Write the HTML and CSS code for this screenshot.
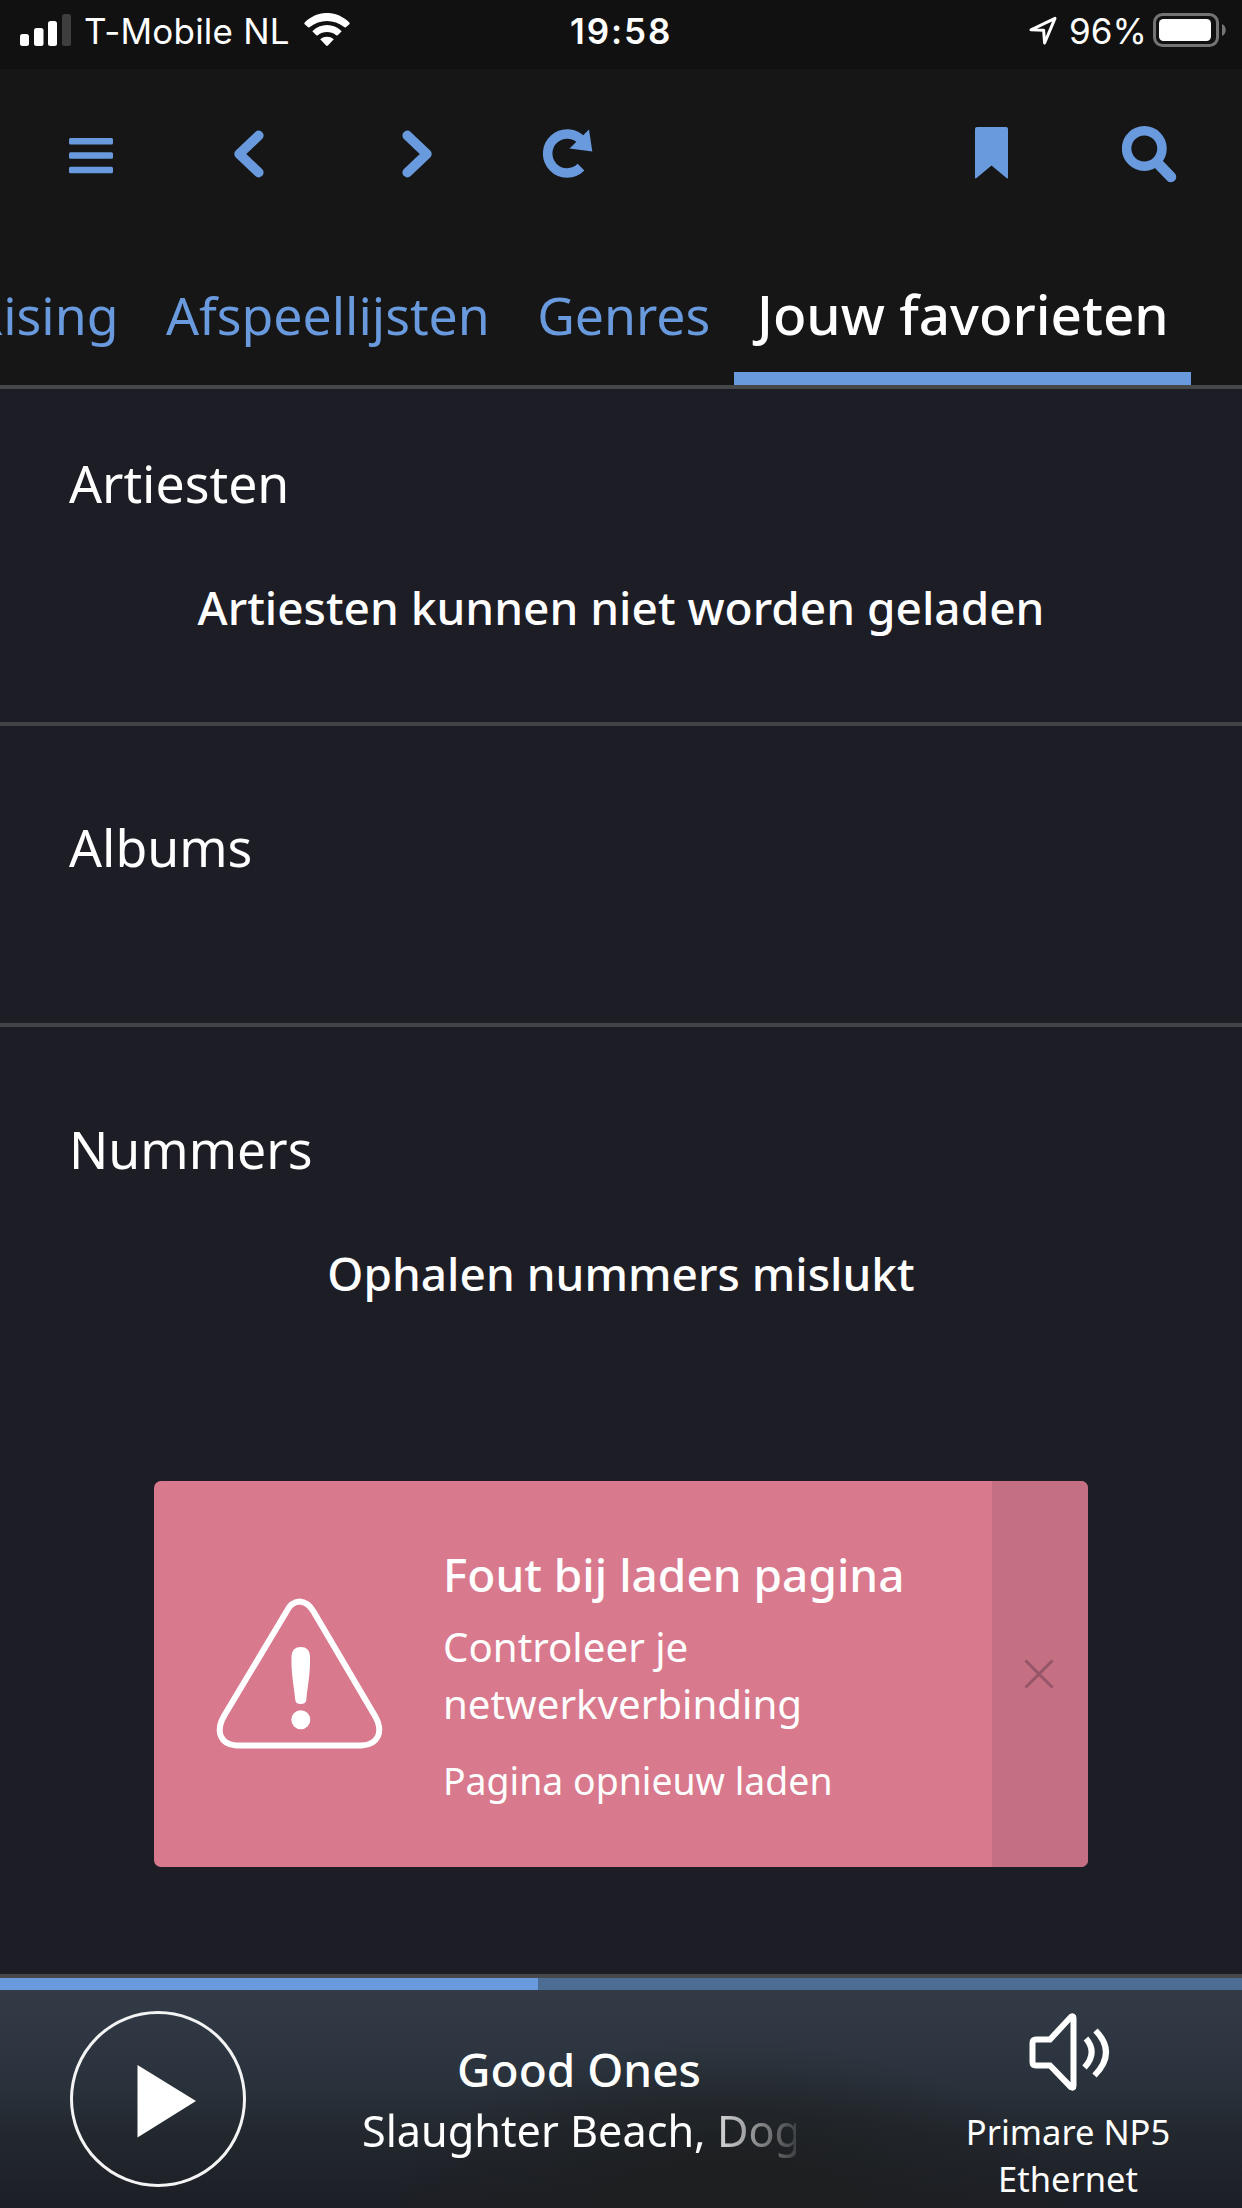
FILE: index.html
```html
<!DOCTYPE html>
<html lang="nl">
<head>
<meta charset="utf-8">
<title>Jouw favorieten</title>
<link rel="stylesheet" href="styles.css">
</head>
<body>
<div class="app">
  <header class="status">
    <svg class="signal" width="51" height="32" viewBox="0 0 51 32" fill="#fff"><rect y="20" width="9" height="12" rx="2.5"/><rect x="14" y="14" width="9.5" height="18" rx="2.5"/><rect x="28" y="7" width="9" height="25" rx="2.5"/><rect x="42" width="9" height="32" rx="2.5" fill="#3e3e3e"/></svg>
    <span class="carrier">T-Mobile NL</span>
    <svg class="wifi" width="46" height="34" viewBox="0 0 46 34" fill="#fff"><path d="M.7 9.500Q-.2 10.300 .7 11.300L4.100 14.200Q5 14.900 5.900 14.100C15.500 5.800 30.500 5.800 40.100 14.100Q41 14.900 41.900 14.200L45.300 11.300Q46.200 10.300 45.300 9.500C32.500-3.200 13.500-3.200 .7 9.500Z"/><path d="M8.300 18.200 12 22.100Q12.800 23 13.800 22.200C19 18 27 18 32.200 22.200Q33.200 23 34 22.100L37.700 18.200C29.500 9.800 16.500 9.800 8.300 18.200Z"/><path d="M16.200 26.200C20 22.900 26 22.900 29.800 26.200L23.900 32.500Q23 33.400 22.100 32.500Z"/></svg>
    <span class="clock">19:58</span>
    <svg class="location" width="28" height="29" viewBox="0 0 28 29" fill="none" stroke="#fff" stroke-width="3" stroke-linejoin="round"><path d="M2 13.800 26 2.300 15.600 27 14.600 14.200Z"/></svg>
    <span class="percent">96%</span>
    <svg class="battery" width="74" height="34" viewBox="0 0 74 34"><rect x="1.500" y="1.500" width="63" height="31" rx="8" fill="none" stroke="#747474" stroke-width="3"/><rect x="6" y="6" width="52" height="22" rx="4.500" fill="#fff"/><path d="M69 11C74 13 74 21 69 23Z" fill="#747474"/></svg>
  </header>

  <nav class="toolbar">
    <svg class="menu" width="44" height="36" viewBox="0 0 44 36" fill="#6a9ade"><rect width="44" height="6.500" rx="1.500"/><rect y="14.300" width="44" height="6.500" rx="1.500"/><rect y="28.700" width="44" height="6.500" rx="1.500"/></svg>
    <svg class="back" width="30" height="48" viewBox="0 0 30 48" fill="none" stroke="#6a9ade" stroke-width="9.800" stroke-linecap="round" stroke-linejoin="round"><path d="M24.700 5.500 5.200 24 24.700 42.500"/></svg>
    <svg class="forward" width="30" height="48" viewBox="0 0 30 48" fill="none" stroke="#6a9ade" stroke-width="9.800" stroke-linecap="round" stroke-linejoin="round"><path d="M5.300 5.500 24.800 24 5.300 42.500"/></svg>
    <svg class="reload" width="50" height="50" viewBox="0 0 50 50"><path d="M38 38.200A19.500 19.500 0 1 1 39 11.800" fill="none" stroke="#6a9ade" stroke-width="9.500"/><path d="M46 .5 49.300 22.500 26.500 19.500Z" fill="#6a9ade"/></svg>
    <svg class="bookmark" width="33" height="52" viewBox="0 0 33 52" fill="#6a9ade"><path d="M2 0H31Q33 0 33 2V50.500Q33 52 31.500 51L16.500 38.500 1.500 51Q0 52 0 50.500V2Q0 0 2 0Z"/></svg>
    <svg class="search" width="55" height="57" viewBox="0 0 55 57" fill="none" stroke="#6a9ade"><circle cx="22.300" cy="22.500" r="17.700" stroke-width="9.500"/><path d="M36 37.500 49 51" stroke-width="10.500" stroke-linecap="round"/></svg>
  </nav>

  <nav class="tabs">
    <a class="tab">Rising</a>
    <a class="tab">Afspeellijsten</a>
    <a class="tab">Genres</a>
    <a class="tab active">Jouw favorieten</a>
  </nav>

  <main class="content">
    <section class="section artists">
      <h2>Artiesten</h2>
      <p class="message">Artiesten kunnen niet worden geladen</p>
    </section>
    <section class="section albums">
      <h2>Albums</h2>
    </section>
    <section class="section tracks">
      <h2>Nummers</h2>
      <p class="message">Ophalen nummers mislukt</p>
    </section>
    <aside class="alert">
      <svg class="warning" width="168" height="152" viewBox="0 0 168 152"><path d="M70.500 13.500Q75 4 83.500 3.500 92 4 97.500 13.500L159 118C168 134 162 146.500 146 147.500H20C5 146.500-1 134 8 118Z" fill="none" stroke="#fff" stroke-width="6"/><path d="M75.500 58Q76 49 84.800 49 93.500 49 94 58C94.500 76 91.500 88 90.300 102Q90 106 84.800 106 79.600 106 79.300 102C78 88 75 76 75.500 58Z" fill="#fff"/><circle cx="84.800" cy="121.700" r="9.500" fill="#fff"/></svg>
      <div class="alert-text">
        <h3>Fout bij laden pagina</h3>
        <p class="hint">Controleer je netwerkverbinding</p>
        <p class="retry">Pagina opnieuw laden</p>
      </div>
      <div class="close"><svg width="30" height="30" viewBox="0 0 30 30" fill="none" stroke="#96566a" stroke-width="3"><path d="M1.500 1.500 28.500 28.500M28.500 1.500 1.500 28.500"/></svg></div>
    </aside>
  </main>

  <footer class="player">
    <div class="progress"><div class="elapsed" style="width:538px"></div></div>
    <div class="controls">
      <svg class="play" width="176" height="176" viewBox="0 0 176 176"><circle cx="88" cy="88" r="86.500" fill="none" stroke="#f4f4f4" stroke-width="3"/><path d="M67.500 54 126 90 67.500 126.500Z" fill="#fff"/></svg>
      <div class="now">
        <div class="title">Good Ones</div>
        <div class="artist">Slaughter Beach, Dog</div>
      </div>
      <div class="output">
        <svg width="82" height="78" viewBox="0 0 82 78" fill="none" stroke="#fff" stroke-width="6"><path d="M7 26.500H21L42 3.800Q44.500 2.500 44.500 5V73Q44.500 75.500 42 74.200L21 52.500H7Q3.500 52.500 3.500 49V30Q3.500 26.500 7 26.500Z"/><path d="M57 25.500Q69 39.500 55.500 54.500M66.500 17.500Q88 39.500 65.500 62.500"/></svg>
        <div class="device">Primare NP5<br>Ethernet</div>
      </div>
    </div>
  </footer>
</div>
</body>
</html>
```
FILE: styles.css
```css
* { box-sizing: border-box; margin: 0; padding: 0; }
body { background: #1d1d26; color: #fff; font-family: "Noto Sans", sans-serif; }
svg { display: block; flex: none; }
.app { width: 1242px; height: 2208px; display: flex; flex-direction: column; overflow: hidden; }

.status { height: 69px; background: #111; display: flex; align-items: flex-start; padding-left: 20px; font-family: Inter, sans-serif; font-size: 35px; line-height: 62px; white-space: nowrap; flex: none; }
.signal { margin-top: 14px; }
.carrier { width: 205px; margin-left: 13px; letter-spacing: 0.2px; }
.wifi { margin: 13px 0 0 15px; }
.clock { width: 104px; margin-left: 220px; font-weight: 600; letter-spacing: 1.9px; }
.location { margin: 16px 0 0 355px; }
.percent { width: 76px; margin-left: 12px; }
.battery { margin: 13px 0 0 8px; }

.toolbar { height: 167px; background: #161616; display: flex; padding-left: 69px; flex: none; }
.menu { margin-top: 69px; }
.back { margin: 61px 0 0 121px; }
.forward { margin: 61px 0 0 138px; }
.reload { margin: 60px 0 0 111px; }
.bookmark { margin: 58px 0 0 382px; }
.search { margin: 57px 0 0 114px; }

.tabs { height: 153px; background: #161616; border-bottom: 4px solid #464749; display: flex; justify-content: flex-end; padding-right: 51px; overflow: hidden; flex: none; }
.tab { flex: none; padding: 38px 23.700px 0; font-size: 51.750px; line-height: 82px; color: #6a9ade; white-space: nowrap; }
.tab.active { padding: 37px 0 0 23px; color: #fff; font-size: 54.800px; font-weight: 500; border-bottom: 13px solid #6a9ade; width: 457px; }

.content { height: 1585px; flex: none; }
.section { border-bottom: 4px solid #424347; }
.section h2 { font-size: 51.750px; font-weight: 400; line-height: 72px; padding-left: 69px; }
.message { font-size: 46px; font-weight: 500; line-height: 64px; text-align: center; margin-top: 56px; }
.artists { height: 337px; padding-top: 58px; }
.albums { height: 301px; padding-top: 85px; }
.tracks { height: 454px; padding-top: 86px; border-bottom: 0; }
.alert { width: 934px; height: 386px; margin-left: 154px; background: #d9798d; border-radius: 7px; display: flex; overflow: hidden; }
.warning { margin: 117px 0 0 62px; }
.alert-text { width: 549px; margin-left: 59px; padding-top: 61px; }
.alert h3 { font-size: 46px; font-weight: 500; line-height: 64px; }
.hint { width: 400px; font-size: 40.250px; line-height: 56.500px; margin-top: 13px; }
.retry { font-size: 37.400px; line-height: 52px; margin-top: 23px; }
.close { width: 96px; background: #c56f83; display: flex; align-items: center; justify-content: center; padding: 0 2px 1px 0; }

.player { height: 234px; flex: none; border-top: 4px solid #48484a; background: radial-gradient(ellipse 340px 170px at 730px 234px, #1d1f20 20%, transparent), linear-gradient(#343d47, #2b343e 40%, #23282f 68%, #1c1e25); }
.progress { height: 12px; background: #4e6d95; }
.elapsed { height: 12px; background: #6a9ade; }
.controls { display: flex; padding-left: 70px; }
.play { margin-top: 21px; }
.now { width: 434px; margin-left: 116px; padding-top: 47px; text-align: center; white-space: nowrap; }
.title { font-size: 46px; font-weight: 500; line-height: 64px; }
.artist { font-size: 43.200px; line-height: 60px; text-align: left; overflow: hidden; -webkit-mask-image: linear-gradient(90deg, #000 77%, rgba(0, 0, 0, 0.15)); mask-image: linear-gradient(90deg, #000 77%, rgba(0, 0, 0, 0.15)); }
.output { width: 260px; margin-left: 142px; padding-top: 23px; }
.output svg { margin-left: 91px; }
.device { font-size: 34.500px; line-height: 47px; text-align: center; margin-top: 17px; }
```
